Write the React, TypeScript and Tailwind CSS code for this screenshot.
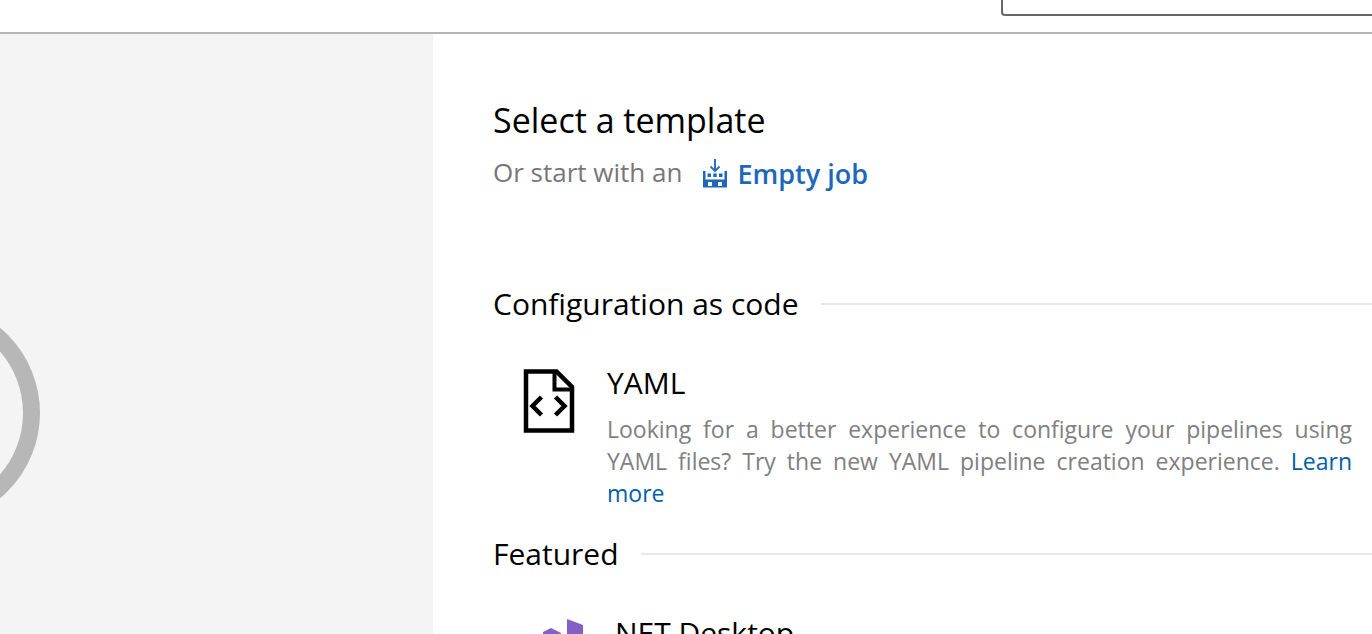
import type { ReactNode } from "react";

function EmptyJobIcon() {
  return (
    <svg aria-hidden="true" viewBox="0 0 26 30" className="h-[30px] w-[26px] shrink-0" fill="none">
      <path d="M13 0v12M8.500 7.500l4.500 4.500L17.500 7.500" stroke="#2b73c0" strokeWidth="2" />
      <path
        fillRule="evenodd"
        fill="#1d68b8"
        d="M1 12h2.500v8.500h19v-8.500H25v16.500H1zM6 23v4h4v-4zM16 23v4h4v-4z"
      />
      <path fill="#1d68b8" d="M5.500 14.500h3.500v3.500H5.500zM11.250 14.500h3.500v3.500h-3.500zM17 14.500h3.500v3.500H17z" />
    </svg>
  );
}

function YamlIcon() {
  return (
    <svg aria-hidden="true" viewBox="0 0 52 64" className="h-16 w-[52px]" fill="none" stroke="#000">
      <path d="M3 2.500h30.500l15.500 15.500v43.500H3z" strokeWidth="4.500" />
      <path d="M31.500 3v17.500H49" strokeWidth="4" />
      <path d="M18.500 28l-9 9 9 9M32.500 28l9 9-9 9" strokeWidth="4.500" />
    </svg>
  );
}

function DotNetIcon() {
  return (
    <svg aria-hidden="true" viewBox="0 0 64 64" className="h-16 w-16">
      <path fill="#865fc5" d="M48 0l16 6v52l-16 6zM24 13l8-4 10 5v38l-10 5-8-4zM4 26l8-4 8 4v22l-8 4-8-4z" />
    </svg>
  );
}

function Section({ title, children }: { title: string; children: ReactNode }) {
  return (
    <section>
      <div className="flex items-center gap-[22px]">
        <h2 className="text-[30px] leading-10">{title}</h2>
        <div className="h-0.5 flex-1 bg-[#e8e8e8]" />
      </div>
      {children}
    </section>
  );
}

export default function App() {
  return (
    <div className="flex h-screen flex-col overflow-hidden bg-white font-['Open_Sans','Noto_Sans',sans-serif] text-black">
      <header className="flex h-[34px] shrink-0 items-end justify-end overflow-hidden border-b-2 border-[#b5b5b5] pb-4">
        <input
          type="text"
          aria-label="Search templates"
          className="-mr-2 h-12 w-[379px] shrink-0 rounded border-2 border-[#666] bg-white px-3 text-2xl outline-none"
        />
      </header>
      <div className="flex min-h-0 flex-1">
        <aside className="relative w-[433px] shrink-0 overflow-hidden bg-[#f4f4f4]">
          <div className="absolute top-[268px] left-[-182px] size-[222px] rounded-full border-[17px] border-[#b7b7b7]" />
        </aside>
        <main className="min-w-0 flex-1 overflow-hidden pt-16 pl-[60px]">
          <h1 className="text-[34px] leading-[44px]">Select a template</h1>
          <div className="flex items-start gap-5 text-[#777]">
            <span className="text-[26px] leading-[60px]">Or start with an</span>
            <a
              href="#empty-job"
              className="flex items-center gap-[9px] text-[27px] leading-[64px] font-semibold text-[#1d68b8]"
            >
              <EmptyJobIcon />
              Empty job
            </a>
          </div>
          <div className="mt-[78px]">
            <Section title="Configuration as code">
              <article className="flex gap-8 pt-[39px] pr-5 pl-[30px]">
                <div className="shrink-0 pt-[6px]">
                  <YamlIcon />
                </div>
                <div>
                  <h3 className="text-[30px] leading-10">YAML</h3>
                  <p className="mt-[10px] text-justify text-[23px] leading-8 text-[#808080]">
                    Looking for a better experience to configure your pipelines using YAML files? Try the new YAML
                    pipeline creation experience.{" "}
                    <a href="#learn-more" className="text-[#0060a8]">
                      Learn more
                    </a>
                  </p>
                </div>
              </article>
            </Section>
          </div>
          <div className="mt-[25px]">
            <Section title="Featured">
              <article className="flex gap-6 pt-[39px] pl-[26px]">
                <div className="shrink-0 pt-[6px]">
                  <DotNetIcon />
                </div>
                <h3 className="text-[30px] leading-10">.NET Desktop</h3>
              </article>
            </Section>
          </div>
        </main>
      </div>
    </div>
  );
}
